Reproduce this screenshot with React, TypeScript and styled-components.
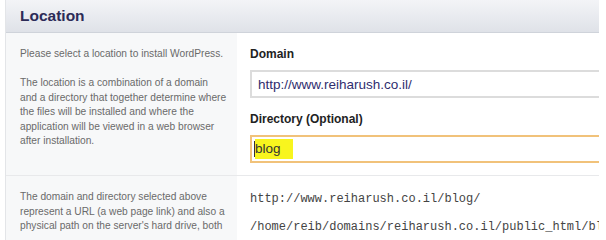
import styled, { createGlobalStyle } from "styled-components";

const GlobalStyle = createGlobalStyle`
  body {
    margin: 0;
    background: #ffffff;
    font-family: "Liberation Sans", Arial, sans-serif;
  }
`;

export default function App() {
  return (
    <>
      <GlobalStyle />
      <Panel>
        <Header>
          <Title>Location</Title>
        </Header>

        <Row>
          <Side>
            <Note>Please select a location to install WordPress.</Note>
            <Note>
              The location is a combination of a domain
              <br />
              and a directory that together determine where
              <br />
              the files will be installed and where the
              <br />
              application will be viewed in a web browser
              <br />
              after installation.
            </Note>
          </Side>
          <Main>
            <Label>Domain</Label>
            <Field>
              <FieldText>http://www.reiharush.co.il/</FieldText>
            </Field>
            <Label>Directory (Optional)</Label>
            <Field $focused>
              <Caret />
              <Highlight>blog</Highlight>
            </Field>
          </Main>
        </Row>

        <Row>
          <Side>
            <Note>
              The domain and directory selected above
              <br />
              represent a URL (a web page link) and also a
              <br />
              physical path on the server's hard drive, both
            </Note>
          </Side>
          <Main>
            <Path>http://www.reiharush.co.il/blog/</Path>
            <Path>/home/reib/domains/reiharush.co.il/public_html/blog/</Path>
          </Main>
        </Row>
      </Panel>
    </>
  );
}

const Panel = styled.div`
  margin-left: 5px;
  width: 593px;
  height: 240px;
  border-left: 1px solid #e3e5e8;
  overflow: hidden;
`;

const Header = styled.div`
  height: 32px;
  display: flex;
  align-items: center;
  padding-left: 14px;
  background: linear-gradient(#f3f4f7, #dfe2e8);
  border-bottom: 1px solid #cfd3da;
`;

const Title = styled.h2`
  margin: 0;
  font-size: 15.5px;
  font-weight: bold;
  color: #2c2b57;
`;

const Row = styled.div`
  display: grid;
  grid-template-columns: 231px 1fr;
  border-bottom: 1px solid #e8e9eb;
`;

const Side = styled.div`
  background: #f7f8f9;
  padding: 14px 6px 12px 14px;
`;

const Note = styled.p`
  margin: 0 0 14.5px 0;
  font-size: 10.2px;
  line-height: 14.5px;
  color: #6a6a6a;
  white-space: nowrap;
`;

const Main = styled.div`
  padding: 14px 0 12px 13px;
  overflow: hidden;
`;

const Label = styled.div`
  font-size: 12px;
  font-weight: bold;
  line-height: 15px;
  color: #222222;
  margin-bottom: 8px;
`;

const Field = styled.div<{ $focused?: boolean }>`
  width: 400px;
  height: 24px;
  box-sizing: content-box;
  display: flex;
  align-items: center;
  padding: 0 6px;
  border: 2px solid ${(p) => (p.$focused ? "#f1c27a" : "#dcdcdc")};
  margin-bottom: ${(p) => (p.$focused ? "0" : "14px")};
  background: #ffffff;
`;

const FieldText = styled.span`
  font-size: 13.5px;
  color: #2f2d6e;
`;

const Caret = styled.span`
  width: 1px;
  height: 16px;
  background: #333333;
  margin-left: -4px;
`;

const Highlight = styled.span`
  background: #f8f51e;
  font-size: 13.5px;
  color: #333333;
  line-height: 20px;
  padding: 0 12px 0 0;
`;

const Path = styled.div`
  font-family: "Liberation Mono", "Courier New", monospace;
  font-size: 12px;
  line-height: 14px;
  color: #444444;
  white-space: nowrap;
  margin: 2px 0 14px 0;
`;
